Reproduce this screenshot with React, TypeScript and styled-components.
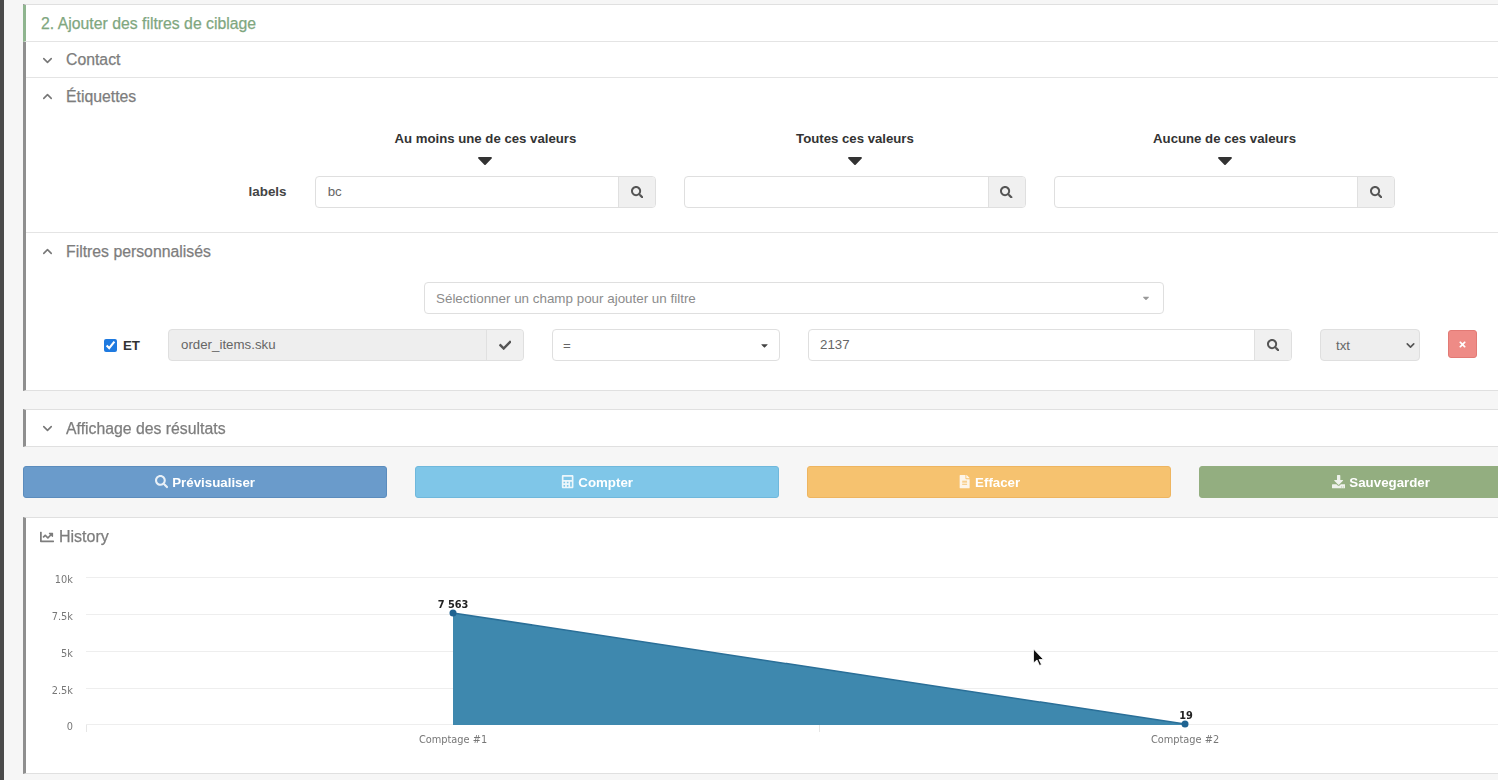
import React from "react";
import styled, { createGlobalStyle } from "styled-components";
import { FaSearch, FaCheck, FaCalculator, FaFileAlt, FaDownload, FaChartLine, FaTimes, FaCaretDown } from "react-icons/fa";
import { LuChevronDown, LuChevronUp } from "react-icons/lu";

const Global = createGlobalStyle`
  html, body { margin: 0; padding: 0; height: 100%; overflow: hidden; background: #f6f6f6; }
  body { font-family: "Liberation Sans", Arial, sans-serif; color: #555; }
  * { box-sizing: border-box; }
`;

const Page = styled.div`
  position: relative;
  width: 1498px;
  height: 780px;
  overflow: hidden;
  display: flex;
  filter: blur(0.6px);
`;
const SideStrip = styled.div`
  width: 4px;
  flex: none;
  background: #4a4a4a;
`;
const Main = styled.main`
  flex: 1;
  min-width: 0;
  padding: 4px 0 0 19px;
  display: flex;
  flex-direction: column;
`;
const Panel = styled.section<{ $mb?: number }>`
  background: #fff;
  border: 1px solid #e0e0e0;
  border-left: 3px solid #8f8f8f;
  border-right: 0;
  margin-bottom: ${(p) => p.$mb ?? 0}px;
`;
const StepTitle = styled.h2`
  margin: 0 0 0 -3px;
  padding: 1px 0 0 15px;
  height: 37px;
  display: flex;
  align-items: center;
  font-size: 15.8px;
  font-weight: 400;
  -webkit-text-stroke: 0.25px #7fa77f;
  color: #7fa77f;
  border-left: 3px solid #8fb58f;
  border-bottom: 1px solid #e4e4e4;
`;
const SectionHead = styled.div<{ $border?: boolean }>`
  height: 36px;
  display: flex;
  align-items: center;
  gap: 11px;
  padding: 1px 0 0 14px;
  font-size: 15.8px;
  -webkit-text-stroke: 0.25px #7d7d7d;
  color: #7d7d7d;
  svg { color: #777; flex: none; stroke-width: 2.5; }
  ${(p) => (p.$border ? "border-bottom: 1px solid #e4e4e4;" : "")}
`;
const LabelsBody = styled.div`
  height: 119px;
  border-bottom: 1px solid #e4e4e4;
  display: grid;
  grid-template-columns: 260.5px repeat(3, 341.4px);
  column-gap: 28.2px;
  grid-template-rows: 62px 32px;
`;
const ColHead = styled.div`
  display: flex;
  flex-direction: column;
  align-items: center;
  justify-content: flex-end;
  font-size: 13.2px;
  font-weight: 700;
  color: #333;
  line-height: 14px;
  svg { color: #333; margin-top: 2px; margin-bottom: 4px; }
`;
const RowLabel = styled.div`
  align-self: center;
  text-align: right;
  font-size: 13.4px;
  font-weight: 700;
  color: #444;
  padding-bottom: 1px;
`;
const InputGroup = styled.div<{ $w?: number; $ml?: number; $muted?: boolean }>`
  display: flex;
  height: 32px;
  ${(p) => (p.$w ? `width: ${p.$w}px; flex: none;` : "")}
  margin-left: ${(p) => p.$ml ?? 0}px;
  border: 1px solid #dfdfdf;
  border-radius: 4px;
  overflow: hidden;
  background: ${(p) => (p.$muted ? "#eeeeee" : "#fff")};
`;
const TextField = styled.input<{ $pad?: number }>`
  flex: 1;
  min-width: 0;
  border: 0;
  outline: 0;
  background: transparent;
  padding: 0 0 2px ${(p) => p.$pad ?? 12}px;
  font: 13.3px "Liberation Sans", Arial, sans-serif;
  color: #666;
`;
const Addon = styled.span<{ $w?: number }>`
  width: ${(p) => p.$w ?? 37}px;
  flex: none;
  display: flex;
  align-items: center;
  justify-content: center;
  background: #f0f0f0;
  border-left: 1px solid #e0e0e0;
  color: #555;
  font-size: 12.5px;
`;
const FiltersBody = styled.div`
  height: 121px;
  padding-top: 13px;
`;
const ChampSelect = styled.div`
  margin-left: 398px;
  width: 740px;
  height: 32px;
  border: 1px solid #dfdfdf;
  border-radius: 4px;
  display: flex;
  align-items: center;
  justify-content: space-between;
  padding: 0 12px 0 11px;
  font-size: 13.4px;
  color: #8c8c8c;
  svg { color: #999; }
`;
const FilterRow = styled.div`
  display: flex;
  align-items: flex-start;
  margin-top: 15px;
  padding-left: 78px;
`;
const AndLabel = styled.label`
  width: 64px;
  flex: none;
  height: 32px;
  display: flex;
  align-items: center;
  gap: 6px;
  font-size: 13.3px;
  font-weight: 700;
  color: #333;
`;
const Check = styled.input`
  width: 13px;
  height: 13px;
  margin: 0;
  accent-color: #1f7ae0;
`;
const SelectBox = styled.div<{ $w: number; $muted?: boolean; $ml: number }>`
  width: ${(p) => p.$w}px;
  margin-left: ${(p) => p.$ml}px;
  flex: none;
  height: 32px;
  border: 1px solid #dfdfdf;
  border-radius: 4px;
  background: ${(p) => (p.$muted ? "#eeeeee" : "#fff")};
  display: flex;
  align-items: center;
  justify-content: space-between;
  padding: 0 ${(p) => (p.$muted ? 2 : 9)}px 0 ${(p) => (p.$muted ? 15 : 10)}px;
  font-size: 13.3px;
  color: #666;
`;
const DeleteBtn = styled.button`
  margin: 1px 0 0 28px;
  width: 29px;
  height: 28px;
  flex: none;
  padding: 0;
  border: 1px solid #e27a75;
  border-radius: 3px;
  background: #ee8b86;
  color: #fff;
  display: flex;
  align-items: center;
  justify-content: center;
  font-size: 9px;
`;
const ButtonBar = styled.div`
  display: grid;
  grid-template-columns: repeat(4, 364px);
  column-gap: 28px;
  margin: 19px 0;
`;
const ActionBtn = styled.button<{ $bg: string; $bd: string }>`
  height: 32px;
  border: 1px solid ${(p) => p.$bd};
  border-radius: 3px;
  background: ${(p) => p.$bg};
  color: #fff;
  display: flex;
  align-items: center;
  justify-content: center;
  gap: 4px;
  font: 700 13.3px "Liberation Sans", Arial, sans-serif;
  padding: 0;
  svg { opacity: 0.85; }
`;
const HistoryTitle = styled.div`
  height: 38px;
  display: flex;
  align-items: center;
  gap: 5px;
  padding-left: 14px;
  font-size: 16px;
  -webkit-text-stroke: 0.25px #7d7d7d;
  color: #7d7d7d;
  svg { font-size: 14px; }
`;
const ChartSvg = styled.svg`
  display: block;
  width: 1472px;
  height: 217px;
`;
const Cursor = styled.svg`
  position: absolute;
  left: 1032px;
  top: 648px;
`;

const axisText = { fontFamily: '"DejaVu Sans", sans-serif', fontSize: 9.8, fill: "#777" } as const;
const valText = { fontFamily: '"DejaVu Sans", sans-serif', fontSize: 9.8, fontWeight: 700, fill: "#222" } as const;

const X0 = 60;
const yTicks: [string, number][] = [["10k", 21.5], ["7.5k", 58.5], ["5k", 95.5], ["2.5k", 132.5], ["0", 168.5]];

function Chart() {
  return (
    <ChartSvg viewBox="0 0 1472 217">
      {yTicks.map(([t, y]) => (
        <g key={t}>
          <line x1={X0} x2={1472} y1={y} y2={y} stroke="#eeeeee" />
          <text x={47} y={y + 5} textAnchor="end" {...axisText}>{t}</text>
        </g>
      ))}
      <path d={`M${X0}.5 169V176M793.5 169V176`} stroke="#e6e6e6" />
      <path d="M427 57L1159 168V169H427Z" fill="#3e88ae" />
      <path d="M427 57L1159 168" stroke="#2a6f98" strokeWidth="1.5" fill="none" />
      <circle cx="427" cy="57" r="3.5" fill="#1f6391" />
      <circle cx="1159" cy="168" r="3.5" fill="#1f6391" />
      <text x="427" y="52" textAnchor="middle" {...valText}>7 563</text>
      <text x="1160" y="163" textAnchor="middle" {...valText}>19</text>
      <text x="427" y="187" textAnchor="middle" {...axisText}>Comptage #1</text>
      <text x="1159" y="187" textAnchor="middle" {...axisText}>Comptage #2</text>
    </ChartSvg>
  );
}

export default function App() {
  return (
    <>
      <Global />
      <Page>
        <SideStrip />
        <Main>
          <Panel $mb={18}>
            <StepTitle>2. Ajouter des filtres de ciblage</StepTitle>
            <SectionHead $border><LuChevronDown size={15} />Contact</SectionHead>
            <SectionHead><LuChevronUp size={15} />Étiquettes</SectionHead>
            <LabelsBody>
              <span />
              <ColHead>Au moins une de ces valeurs<FaCaretDown size={24} /></ColHead>
              <ColHead>Toutes ces valeurs<FaCaretDown size={24} /></ColHead>
              <ColHead>Aucune de ces valeurs<FaCaretDown size={24} /></ColHead>
              <RowLabel>labels</RowLabel>
              <InputGroup>
                <TextField defaultValue="bc" readOnly />
                <Addon><FaSearch /></Addon>
              </InputGroup>
              <InputGroup>
                <TextField readOnly />
                <Addon><FaSearch /></Addon>
              </InputGroup>
              <InputGroup>
                <TextField readOnly />
                <Addon><FaSearch /></Addon>
              </InputGroup>
            </LabelsBody>
            <SectionHead><LuChevronUp size={15} />Filtres personnalisés</SectionHead>
            <FiltersBody>
              <ChampSelect>
                Sélectionner un champ pour ajouter un filtre
                <FaCaretDown size={10} />
              </ChampSelect>
              <FilterRow>
                <AndLabel><Check type="checkbox" defaultChecked readOnly />ET</AndLabel>
                <InputGroup $w={356} $muted>
                  <TextField defaultValue="order_items.sku" readOnly />
                  <Addon><FaCheck /></Addon>
                </InputGroup>
                <SelectBox $w={228} $ml={28}>=<FaCaretDown size={11} color="#444" /></SelectBox>
                <InputGroup $w={484} $ml={28}>
                  <TextField defaultValue="2137" readOnly $pad={11} />
                  <Addon><FaSearch /></Addon>
                </InputGroup>
                <SelectBox $w={100} $ml={28} $muted>txt<LuChevronDown size={13} strokeWidth={3} color="#555" /></SelectBox>
                <DeleteBtn aria-label="Supprimer"><FaTimes /></DeleteBtn>
              </FilterRow>
            </FiltersBody>
          </Panel>
          <Panel>
            <SectionHead><LuChevronDown size={15} />Affichage des résultats</SectionHead>
          </Panel>
          <ButtonBar>
            <ActionBtn $bg="#6a9bcb" $bd="#5b8cbd"><FaSearch />Prévisualiser</ActionBtn>
            <ActionBtn $bg="#7fc6e8" $bd="#6fb8dc"><FaCalculator />Compter</ActionBtn>
            <ActionBtn $bg="#f6c26f" $bd="#eeb560"><FaFileAlt />Effacer</ActionBtn>
            <ActionBtn $bg="#93ae80" $bd="#93ae80"><FaDownload />Sauvegarder</ActionBtn>
          </ButtonBar>
          <Panel>
            <HistoryTitle><FaChartLine />History</HistoryTitle>
            <Chart />
          </Panel>
        </Main>
        <Cursor width="14" height="20" viewBox="0 0 14 20">
          <path d="M1.5 1V15L5 12L7.5 17.5L9.5 16.5L7 11.5H11.5Z" fill="#111" stroke="#fff" strokeWidth="0.8" />
        </Cursor>
      </Page>
    </>
  );
}
